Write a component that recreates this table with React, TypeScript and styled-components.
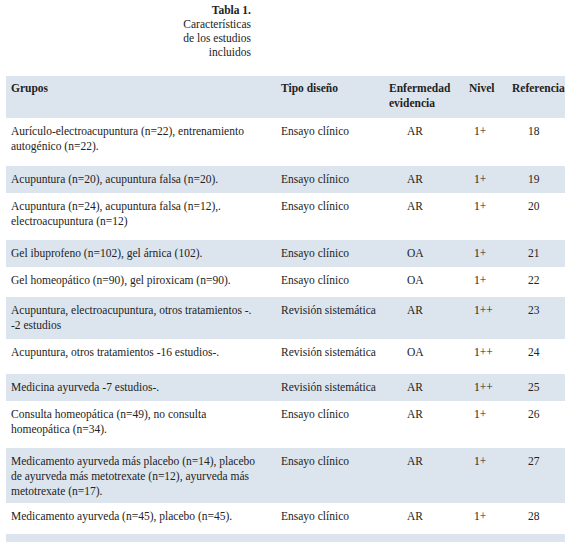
import React from "react";
import styled, { createGlobalStyle } from "styled-components";

const GlobalStyle = createGlobalStyle`
  body {
    margin: 0;
    background: #ffffff;
  }
`;

const Page = styled.div`
  width: 577px;
  padding-top: 3px;
  font-family: "Liberation Serif", Tinos, "DejaVu Serif", serif;
  color: #232323;
`;

const Caption = styled.div`
  width: 251px;
  text-align: right;
  font-size: 11.5px;
  line-height: 14px;
  margin-bottom: 17px;
`;

const CaptionTitle = styled.div`
  font-weight: bold;
`;

const Table = styled.div`
  margin-left: 6px;
  width: 559px;
  display: flex;
  flex-direction: column;
`;

const Row = styled.div<{ $h: number; $alt?: boolean }>`
  display: grid;
  grid-template-columns: 270px 108px 80px 43px 58px;
  height: ${(p) => p.$h}px;
  background: ${(p) => (p.$alt ? "#dce5ee" : "#ffffff")};
  font-size: 11.5px;
  line-height: 15px;
`;

const HeadCell = styled.div`
  padding: 5px 0 0 5px;
  font-weight: bold;
  white-space: nowrap;
`;

const Cell = styled.div<{ $indent?: number }>`
  padding: 6px 0 0 ${(p) => p.$indent ?? 5}px;
  white-space: nowrap;
`;

interface Study {
  grupos: string[];
  tipo: string;
  enf: string;
  nivel: string;
  ref: string;
  h: number;
}

const ENSAYO = "Ensayo clínico";
const REVISION = "Revisión sistemática";

const studies: Study[] = [
  {
    grupos: ["Aurículo-electroacupuntura (n=22), entrenamiento", "autogénico (n=22)."],
    tipo: ENSAYO,
    enf: "AR",
    nivel: "1+",
    ref: "18",
    h: 48,
  },
  {
    grupos: ["Acupuntura (n=20), acupuntura falsa (n=20)."],
    tipo: ENSAYO,
    enf: "AR",
    nivel: "1+",
    ref: "19",
    h: 27,
  },
  {
    grupos: ["Acupuntura (n=24), acupuntura falsa (n=12),.", "electroacupuntura (n=12)"],
    tipo: ENSAYO,
    enf: "AR",
    nivel: "1+",
    ref: "20",
    h: 47,
  },
  {
    grupos: ["Gel ibuprofeno (n=102), gel árnica (102)."],
    tipo: ENSAYO,
    enf: "OA",
    nivel: "1+",
    ref: "21",
    h: 27,
  },
  {
    grupos: ["Gel homeopático (n=90), gel piroxicam (n=90)."],
    tipo: ENSAYO,
    enf: "OA",
    nivel: "1+",
    ref: "22",
    h: 30,
  },
  {
    grupos: ["Acupuntura, electroacupuntura, otros tratamientos -.", "-2 estudios"],
    tipo: REVISION,
    enf: "AR",
    nivel: "1++",
    ref: "23",
    h: 42,
  },
  {
    grupos: ["Acupuntura, otros tratamientos -16 estudios-."],
    tipo: REVISION,
    enf: "OA",
    nivel: "1++",
    ref: "24",
    h: 35,
  },
  {
    grupos: ["Medicina ayurveda -7 estudios-."],
    tipo: REVISION,
    enf: "AR",
    nivel: "1++",
    ref: "25",
    h: 27,
  },
  {
    grupos: ["Consulta homeopática (n=49), no consulta", "homeopática (n=34)."],
    tipo: ENSAYO,
    enf: "AR",
    nivel: "1+",
    ref: "26",
    h: 47,
  },
  {
    grupos: [
      "Medicamento ayurveda más placebo (n=14), placebo",
      "de ayurveda más metotrexate (n=12), ayurveda más",
      "metotrexate (n=17).",
    ],
    tipo: ENSAYO,
    enf: "AR",
    nivel: "1+",
    ref: "27",
    h: 55,
  },
  {
    grupos: ["Medicamento ayurveda (n=45), placebo (n=45)."],
    tipo: ENSAYO,
    enf: "AR",
    nivel: "1+",
    ref: "28",
    h: 31,
  },
];

export default function App() {
  return (
    <Page>
      <GlobalStyle />
      <Caption>
        <CaptionTitle>Tabla 1.</CaptionTitle>
        <div>Características</div>
        <div>de los estudios</div>
        <div>incluidos</div>
      </Caption>
      <Table>
        <Row $h={42} $alt>
          <HeadCell>Grupos</HeadCell>
          <HeadCell>Tipo diseño</HeadCell>
          <HeadCell>
            Enfermedad
            <br />
            evidencia
          </HeadCell>
          <HeadCell>Nivel</HeadCell>
          <HeadCell>Referencia</HeadCell>
        </Row>
        {studies.map((s, i) => (
          <Row key={s.ref} $h={s.h} $alt={i % 2 === 1}>
            <Cell>
              {s.grupos.map((line) => (
                <div key={line}>{line}</div>
              ))}
            </Cell>
            <Cell>{s.tipo}</Cell>
            <Cell $indent={23}>{s.enf}</Cell>
            <Cell $indent={10}>{s.nivel}</Cell>
            <Cell $indent={21}>{s.ref}</Cell>
          </Row>
        ))}
        <Row $h={8} $alt />
      </Table>
    </Page>
  );
}
